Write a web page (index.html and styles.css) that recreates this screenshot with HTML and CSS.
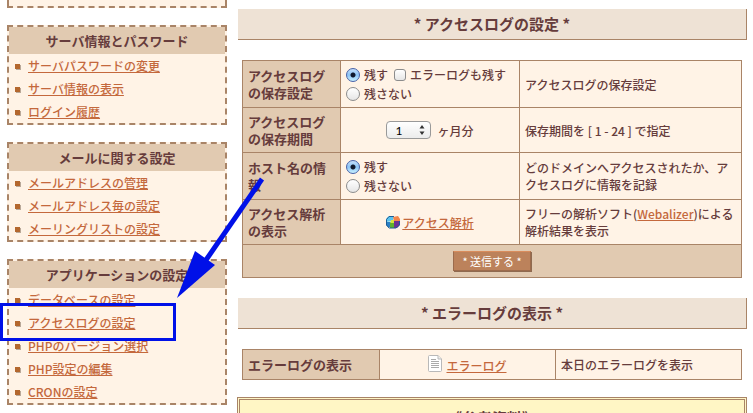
FILE: index.html
```
<!DOCTYPE html>
<html lang="ja">
<head>
    <meta charset="UTF-8">
    <meta name="viewport" content="width=device-width, initial-scale=1.0">
    <title>アクセスログの設定</title>
    <link rel="stylesheet" href="styles.css">
</head>
<body>
    <div class="container">
        <nav class="sidebar">
            <div class="menu menu-end"></div>

            <section class="menu">
                <h2>サーバ情報とパスワード</h2>
                <ul>
                    <li><a href="#">サーバパスワードの変更</a></li>
                    <li><a href="#">サーバ情報の表示</a></li>
                    <li><a href="#">ログイン履歴</a></li>
                </ul>
            </section>

            <section class="menu">
                <h2>メールに関する設定</h2>
                <ul>
                    <li><a href="#">メールアドレスの管理</a></li>
                    <li><a href="#">メールアドレス毎の設定</a></li>
                    <li><a href="#">メーリングリストの設定</a></li>
                </ul>
            </section>

            <section class="menu">
                <h2>アプリケーションの設定</h2>
                <ul>
                    <li><a href="#">データベースの設定</a></li>
                    <li><a href="#">アクセスログの設定</a></li>
                    <li><a href="#">PHPのバージョン選択</a></li>
                    <li><a href="#">PHP設定の編集</a></li>
                    <li><a href="#">CRONの設定</a></li>
                </ul>
            </section>
        </nav>

        <main class="content">
            <h1>* アクセスログの設定 *</h1>
            <form>
                <table class="settings">
                    <colgroup>
                        <col class="col-name">
                        <col class="col-value">
                        <col>
                    </colgroup>
                    <tr>
                        <th>アクセスログの保存設定</th>
                        <td class="options">
                            <div class="option-row">
                                <label><input type="radio" name="access" checked>残す</label>
                                <label><input type="checkbox" name="error">エラーログも残す</label>
                            </div>
                            <div class="option-row">
                                <label><input type="radio" name="access">残さない</label>
                            </div>
                        </td>
                        <td>アクセスログの保存設定</td>
                    </tr>
                    <tr>
                        <th>アクセスログの保存期間</th>
                        <td>
                            <div class="period">
                                <span class="select-box">
                                    <select id="period">
                                        <option>1</option>
                                        <option>2</option>
                                        <option>3</option>
                                    </select>
                                    <svg class="select-arrow" width="6" height="10" viewBox="0 0 6 10"><path d="M3 0L5.500 3.500H.5ZM3 10L.5 6.500H5.500Z" fill="#333"/></svg>
                                </span>
                                <label for="period">ヶ月分</label>
                            </div>
                        </td>
                        <td>保存期間を [ 1 - 24 ] で指定</td>
                    </tr>
                    <tr>
                        <th>ホスト名の情報</th>
                        <td class="options">
                            <div class="option-row">
                                <label><input type="radio" name="host" checked>残す</label>
                            </div>
                            <div class="option-row">
                                <label><input type="radio" name="host">残さない</label>
                            </div>
                        </td>
                        <td>どのドメインへアクセスされたか、アクセスログに情報を記録</td>
                    </tr>
                    <tr>
                        <th>アクセス解析の表示</th>
                        <td>
                            <a href="#" class="icon-link">
                                <svg width="14" height="13" viewBox="0 0 14 13">
                                    <path d="M0 3L3 0H8L7 5L0 6Z" fill="#5bc3ee"/>
                                    <path d="M0 6H5V11H2L0 9Z" fill="#2b7fc4"/>
                                    <path d="M5 4H9V7L4 8Z" fill="#d9e23c"/>
                                    <path d="M4 7H8V12H4Z" fill="#5fb12c"/>
                                    <path d="M8 5H14V9L11 12H8Z" fill="#6d3193"/>
                                    <path d="M.5 3.500L3 .5H8M.5 3.500V9L3 12H10L13.500 9V5" fill="none" stroke="#1c5d96"/>
                                    <path d="M7 1L12 0L14 3V5L8 5Z" fill="#f4854a"/>
                                </svg>
                                <span>アクセス解析</span>
                            </a>
                        </td>
                        <td>フリーの解析ソフト(<a href="#">Webalizer</a>)による解析結果を表示</td>
                    </tr>
                    <tr>
                        <td colspan="3" class="submit-cell"><button type="submit" class="submit">* 送信する *</button></td>
                    </tr>
                </table>
            </form>

            <h1>* エラーログの表示 *</h1>
            <table class="error-log">
                <colgroup>
                    <col class="col-name">
                    <col class="col-value">
                    <col>
                </colgroup>
                <tr>
                    <th>エラーログの表示</th>
                    <td>
                        <a href="#" class="icon-link file-link">
                            <svg width="14" height="17" viewBox="0 0 14 17">
                                <path d="M.5 1.500Q.5.500 1.500.500H10L13.500 4V15.500Q13.500 16.500 12.500 16.500H1.500Q.5 16.500.5 15.500Z" fill="#fff" stroke="#b9b9b9"/>
                                <path d="M10 .5V4H13.500" fill="#eee" stroke="#b9b9b9"/>
                                <path d="M3 4.500H8M3 6.500H11M3 8.500H11M3 10.500H11M3 12.500H11" stroke="#aaa"/>
                            </svg>
                            <span>エラーログ</span>
                        </a>
                    </td>
                    <td>本日のエラーログを表示</td>
                </tr>
            </table>

            <section class="reference">
                <h2>《参考資料》</h2>
            </section>
        </main>
    </div>

    <!-- 説明用の枠と矢印 -->
    <div class="highlight"></div>
    <svg class="arrow" width="90" height="124" viewBox="0 0 90 124">
        <path d="M86 3L30 84" stroke="#0010e8" stroke-width="5"/>
        <path d="M1 122L19 75L39 89Z" fill="#0010e8"/>
    </svg>
</body>
</html>
```
FILE: styles.css
```
* {
    margin: 0;
    padding: 0;
    box-sizing: border-box;
}
html {
    overflow: hidden;
}
body {
    background-color: #fff;
    color: #663c3c;
    font-family: 'Noto Sans CJK JP', sans-serif;
    font-size: 12px;
    font-weight: 500;
    line-height: 17px;
}
a {
    color: #c4683c;
}
.container {
    display: flex;
    align-items: flex-start;
    gap: 10px;
    padding: 0 6px 0 7px;
}
.sidebar {
    display: flex;
    flex-direction: column;
    flex: 0 0 220px;
    gap: 17px;
}
.menu {
    border: 2px dashed #a98467;
    background-color: #fff3e6;
}
.menu-end {
    height: 8px;
    border-top: none;
}
.menu h2 {
    background-color: #e1cab1;
    font-size: 13px;
    line-height: 27px;
    text-align: center;
}
.menu ul {
    list-style: none;
}
.menu li {
    display: flex;
    align-items: center;
    gap: 8px;
    height: 23px;
    padding-left: 6px;
}
.menu li::before {
    content: "";
    width: 5px;
    height: 5px;
    margin-top: 2px;
    background-color: #b3672e;
    box-shadow: 1px 1px 0 #b9a898;
}
.content {
    flex: 1;
    min-width: 0;
    padding-top: 9px;
}
.content h1 {
    margin-left: 1px;
    background-color: #eee2d5;
    border-right: 1px solid #a98467;
    border-bottom: 1px solid #a98467;
    font-size: 15px;
    line-height: 30px;
    text-align: center;
}
table {
    width: calc(100% - 10px);
    margin: 20px 5px;
    border-collapse: collapse;
    table-layout: fixed;
}
th,
td {
    border: 1px solid #a98467;
    padding: 5px;
    text-align: left;
    vertical-align: middle;
}
th {
    background-color: #e1cab1;
    font-size: 13px;
}
td {
    background-color: #fff3e6;
}
.settings .col-name {
    width: 98px;
}
.settings .col-value {
    width: 179px;
}
.error-log {
    margin-bottom: 17px;
}
.error-log .col-name {
    width: 137px;
}
.error-log .col-value {
    width: 176px;
}
.options {
    padding: 4px 5px;
}
.option-row {
    display: flex;
    align-items: center;
    gap: 6px;
    height: 19px;
    white-space: nowrap;
}
.option-row label {
    display: flex;
    align-items: center;
    gap: 4px;
}
input {
    appearance: none;
    border: 1px solid #8c8c8c;
    background: linear-gradient(#fff, #e6e6e6);
}
input[type="radio"] {
    width: 14px;
    height: 14px;
    border-radius: 50%;
}
input[type="radio"]:checked {
    border-color: #4a63a8;
    background: radial-gradient(circle, #10182c 2px, transparent 3px), linear-gradient(#c4defa, #8cc4f6 50%, #c8f0ff);
}
input[type="checkbox"] {
    width: 12px;
    height: 12px;
    border-radius: 3px;
}
.period {
    display: flex;
    align-items: center;
    justify-content: center;
    gap: 6px;
}
.select-box {
    position: relative;
}
.period select {
    display: block;
    appearance: none;
    width: 45px;
    height: 18px;
    padding-left: 8px;
    border: 1px solid #999;
    border-radius: 4px;
    background: linear-gradient(#fff, #ececec);
    color: #000;
    font-family: 'Lato', sans-serif;
    font-size: 12px;
}
.select-arrow {
    position: absolute;
    top: 4px;
    right: 6px;
    pointer-events: none;
}
.icon-link {
    display: flex;
    align-items: center;
    justify-content: center;
    text-decoration: none;
}
.icon-link span {
    padding-left: 2px;
    text-decoration: underline;
}
.file-link {
    align-items: flex-start;
}
.file-link span {
    padding-top: 2px;
    padding-left: 4px;
}
.submit-cell {
    background-color: #e1cab1;
    text-align: center;
}
.submit {
    display: block;
    height: 20px;
    margin: 1px auto;
    padding: 0 8px;
    border: 1px solid #9c6b4c;
    border-top-color: #d98c5c;
    background-color: #bc825b;
    box-shadow: 1px 1px 0 #8f6a50;
    color: #fff;
    font-family: inherit;
    font-size: 11px;
    line-height: 17px;
}
.reference {
    border: 3px double #a98467;
    background-color: #fff6c5;
    text-align: center;
}
.reference h2 {
    padding: 9px;
    font-size: 15px;
    line-height: 17px;
}
.highlight {
    position: absolute;
    top: 303px;
    left: 0;
    width: 176px;
    height: 38px;
    border: 3px solid #0010e8;
}
.arrow {
    position: absolute;
    top: 176px;
    left: 176px;
}
```
